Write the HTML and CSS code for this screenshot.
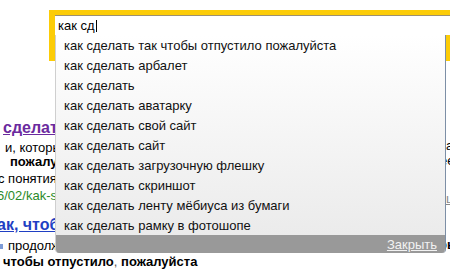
FILE: index.html
```html
<!DOCTYPE html>
<html lang="ru">
<head>
<meta charset="utf-8">
<title>Поиск</title>
<link rel="stylesheet" href="styles.css">
</head>
<body>
<div class="results">
  <div class="col-left">
    <div class="ln title l1"><a class="visited">сделать так чтобы отпустило</a></div>
    <div class="ln snip l2">и, которые помогают</div>
    <div class="ln snip bold l3">пожалуйста</div>
    <div class="ln snip l4">с понятия</div>
    <div class="ln snip url l5">6/02/kak-sdelat</div>
    <div class="ln title l6"><a class="link">ак, чтобы отпустило</a></div>
    <div class="ln snip l7"><span class="mark"></span>продолжение</div>
    <div class="ln snip bold l8">чтобы отпустило<span class="thin">,</span> пожалуйста</div>
  </div>
  <div class="col-right">
    <div class="ln snip r1">ка</div>
    <div class="ln snip r2">ее</div>
    <div class="ln snip r3"><a class="grey">ш</a></div>
    <div class="ln snip bold r4">ры</div>
  </div>
</div>

<div class="search">
  <div class="frame">
    <div class="input">как сд<span class="caret"></span></div>
  </div>
  <div class="popup">
    <ul class="list">
      <li>как сделать так чтобы отпустило пожалуйста</li>
      <li>как сделать арбалет</li>
      <li>как сделать</li>
      <li>как сделать аватарку</li>
      <li>как сделать свой сайт</li>
      <li>как сделать сайт</li>
      <li>как сделать загрузочную флешку</li>
      <li>как сделать скриншот</li>
      <li>как сделать ленту мёбиуса из бумаги</li>
      <li>как сделать рамку в фотошопе</li>
    </ul>
    <div class="foot"><a class="close">Закрыть</a></div>
  </div>
</div>
</body>
</html>
```

FILE: styles.css
```css
* { box-sizing: border-box; margin: 0; padding: 0; }
html, body { width: 450px; height: 274px; overflow: hidden; background: #fff; }
body {
  font-family: "Liberation Sans", Arial, sans-serif;
  color: #000;
  position: relative;
}

/* background page */
.results { display: flex; width: 450px; }
.col-left { width: 446px; flex: none; padding-top: 118px; overflow: hidden; white-space: nowrap; }
.col-right { flex: 1; overflow: hidden; white-space: nowrap; padding-top: 139px; }

.ln { display: block; }
.title { font-size: 16px; font-weight: bold; line-height: 20px; height: 20px; }
.snip { font-size: 13px; line-height: 14px; height: 14px; }
.bold { font-weight: bold; }
.thin { font-weight: normal; color: #555; }

.visited { color: #6b2a9e; text-decoration: underline; }
.link { color: #1f3fc3; text-decoration: underline; }
.url { color: #2a8a2a; }
.grey { color: #888; text-decoration: underline; }

.l1 { padding-left: 3px; }
.l2 { margin-top: 3px; padding-left: 5px; }
.l3 { margin-top: 0; padding-left: 10px; }
.l4 { margin-top: 3px; margin-left: -2px; }
.l5 { margin-top: 3px; margin-left: -3px; }
.l6 { margin-top: 12px; margin-left: -3px; }
.l7 { margin-top: 4px; }
.l8 { margin-top: 2px; padding-left: 3px; }

.mark { display: inline-block; width: 3px; height: 5px; background: #7d9bd6; margin-right: 5px; vertical-align: 1px; }

.r1 { margin-left: -6px; }
.r2 { margin-top: 1px; margin-left: -6px; }
.r3 { margin-top: 24px; }
.r4 { margin-top: 32px; margin-left: -7px; }

/* search suggest overlay */
.search { position: absolute; left: 49px; top: 10px; }
.frame {
  width: 420px;
  height: 51px;
  background: #fccc07;
  padding: 5px 0 0 6px;
}
.input {
  height: 20px;
  background: #fff;
  border-top: 1px solid #9c9070;
  font-size: 13px;
  line-height: 20px;
  padding-left: 3px;
  white-space: nowrap;
}
.caret {
  display: inline-block;
  width: 1px;
  height: 12px;
  background: #000;
  margin-left: 1px;
  vertical-align: -2px;
}

.popup {
  position: absolute;
  left: 6px;
  top: 25px;
  width: 391px;
  height: 218px;
  border-left: 1px solid #cfcfcf;
  border-right: 1px solid #7d8fa6;
  border-radius: 0 0 4px 4px;
  overflow: hidden;
  display: flex;
  flex-direction: column;
}
.list {
  list-style: none;
  flex: 1;
  background: linear-gradient(#ffffff, #ebebeb);
}
.list li {
  height: 20px;
  line-height: 21px;
  font-size: 13px;
  padding-left: 8px;
  white-space: nowrap;
  color: #111;
}
.foot {
  height: 18px;
  background: #999999;
  display: flex;
  justify-content: flex-end;
  align-items: center;
  padding-right: 8px;
}
.close {
  color: #f2f2f2;
  font-size: 13px;
  text-decoration: underline;
}
```
